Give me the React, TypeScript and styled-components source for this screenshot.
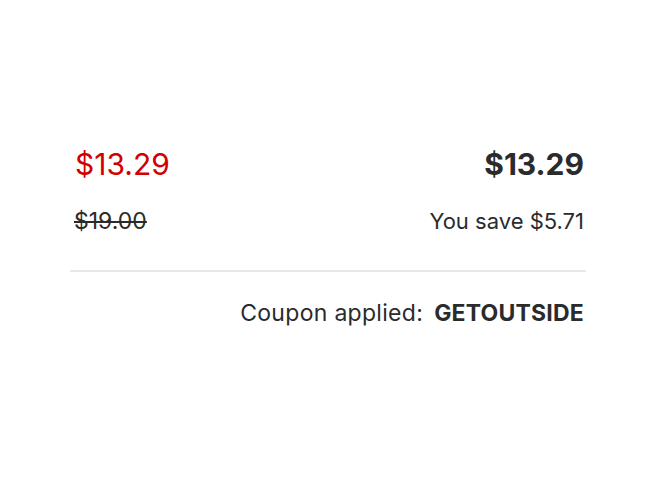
import React from "react";
import styled, { createGlobalStyle } from "styled-components";

const Global = createGlobalStyle`
  html, body { margin: 0; padding: 0; background: #fff; }
  body { font-family: "Inter", "Roboto", "Liberation Sans", sans-serif; color: #2b2b2b; }
`;

const Page = styled.div`
  width: 658px;
  height: 494px;
  box-sizing: border-box;
  padding: 144px 72px 0 70px;
`;

const Summary = styled.section`
  display: flex;
  flex-direction: column;
`;

const Row = styled.div<{ $top?: number }>`
  display: flex;
  justify-content: space-between;
  align-items: baseline;
  margin-top: ${(p) => p.$top ?? 0}px;
`;

const SalePrice = styled.span`
  font-size: 30px;
  line-height: 40px;
  color: #d20000;
  font-weight: 400;
  padding-left: 5px;
`;

const TotalPrice = styled.span`
  font-size: 30px;
  line-height: 40px;
  font-weight: 700;
  color: #2b2b2b;
  padding-right: 2px;
`;

const Original = styled.s`
  font-size: 23px;
  line-height: 30px;
  color: #2b2b2b;
  padding-left: 4px;
  text-decoration-thickness: 1.5px;
`;

const Savings = styled.span`
  font-size: 22px;
  line-height: 30px;
  color: #2b2b2b;
  padding-right: 2px;
`;

const Divider = styled.hr`
  border: 0;
  border-top: 2px solid #e8e8e8;
  margin: 34px 0 26px;
  width: 100%;
`;

const Coupon = styled.div`
  display: flex;
  justify-content: flex-end;
  align-items: baseline;
  gap: 11px;
  font-size: 23px;
  line-height: 30px;
  padding-right: 2px;
`;

const CouponLabel = styled.span`
  letter-spacing: 0.3px;
`;

const CouponCode = styled.strong`
  font-weight: 700;
  letter-spacing: 0.2px;
`;

export default function App() {
  return (
    <>
      <Global />
      <Page>
        <Summary>
          <Row>
            <SalePrice>$13.29</SalePrice>
            <TotalPrice>$13.29</TotalPrice>
          </Row>
          <Row $top={22}>
            <Original>$19.00</Original>
            <Savings>You save $5.71</Savings>
          </Row>
          <Divider />
          <Coupon>
            <CouponLabel>Coupon applied:</CouponLabel>
            <CouponCode>GETOUTSIDE</CouponCode>
          </Coupon>
        </Summary>
      </Page>
    </>
  );
}
